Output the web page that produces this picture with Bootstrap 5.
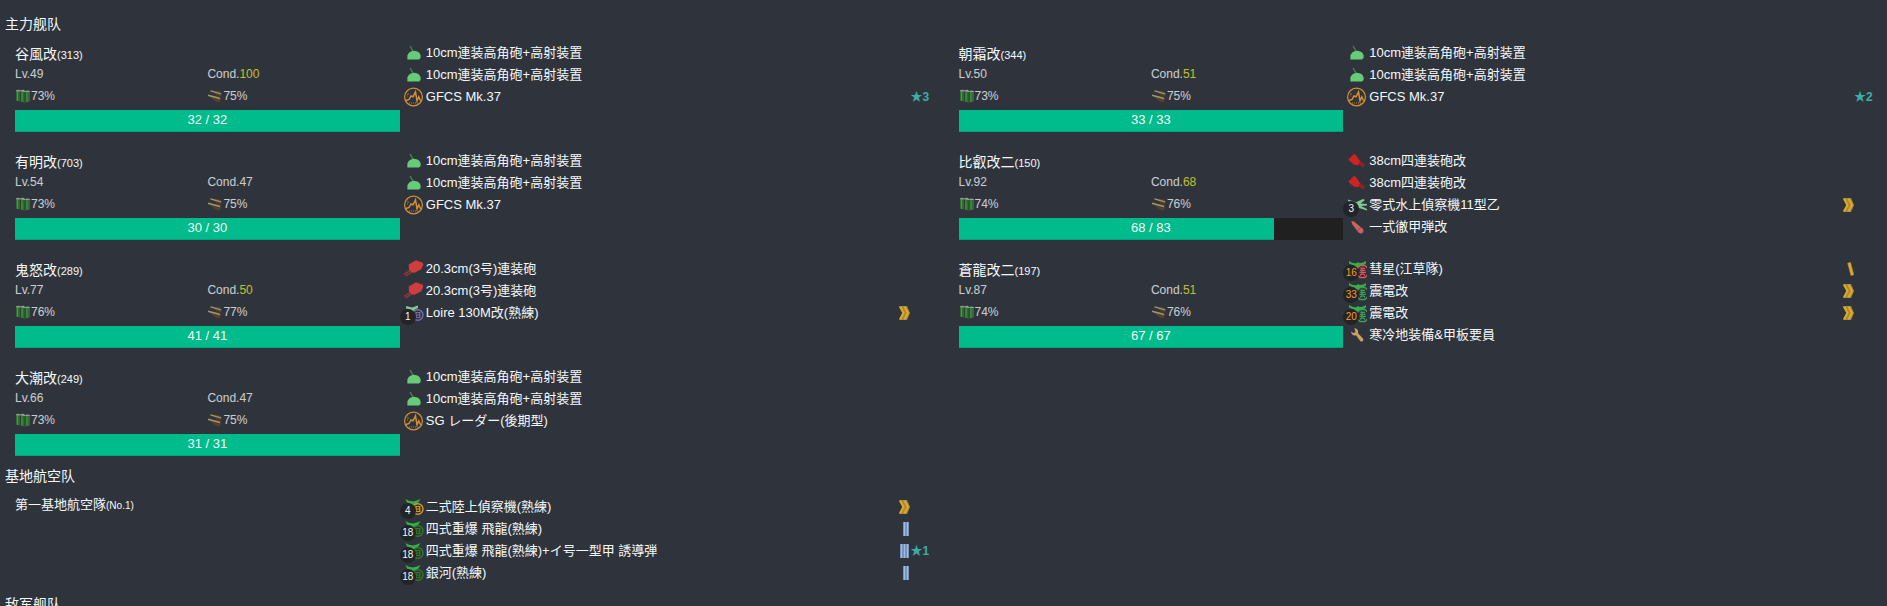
<!DOCTYPE html>
<html lang="zh-CN">
<head>
<meta charset="utf-8">
<meta name="viewport" content="width=device-width, initial-scale=1">
<title>主力舰队</title>
<link href="https://cdn.jsdelivr.net/npm/bootstrap@5.3.0/dist/css/bootstrap.min.css" rel="stylesheet">
<style>
  body { background: #2f343c; color: #f5f8fa; font: 13px/20px "Liberation Sans", "Noto Sans CJK SC", sans-serif; }
  main { padding-top: 14px; }
  .fleet-title { font-size: 14px; line-height: 20px; font-weight: 400; margin: 0; padding-left: 5px; }
  .ship { padding: 8px 5px 10px 15px; }
  .ship-name { font-size: 14px; line-height: 20px; height: 20px; font-weight: 400; margin: 2px 0 0; }
  .ship-name small { font-size: 11px; }
  .stat { font-size: 12px; line-height: 20px; opacity: .78; }
  .supply { line-height: 24px; }
  .supply svg { width: 16px; height: 16px; }
  .good { color: #e4e430; }
  .progress { --bs-progress-height: 22px; --bs-progress-bg: #202020; --bs-progress-border-radius: 0; --bs-progress-bar-bg: #00bc8c; margin-top: 2px; }
  .progress-bar { border-bottom: 1px solid #00a37a; }
  .hp-text { font-size: 13px; line-height: 20px; }
  .equips { padding: 0 10px 0 4px; margin: 0; }
  .equips li { height: 22px; gap: 2px; }
  .slot-icon, .slot-icon svg { width: 20px; height: 20px; overflow: visible; }
  .planes { left: -4px; bottom: -2px; width: 16px; height: 16px; background: #222427; font-size: 10px; line-height: 16px; }
  .few { color: #ff9c1c; }
  .prof { width: 11px; height: 16px; margin-right: -2px; }
  .star { width: 18px; font-size: 12px; font-weight: 700; color: #3aaea6; white-space: nowrap; }
  .airbase { padding: 9px 5px 10px 15px; }
  .base-name { font-size: 13px; line-height: 20px; font-weight: 400; margin: 0; }
  .base-name small { font-size: 10px; }
  .airbase .equips { margin-top: 1px; }
</style>
</head>
<body>
<svg class="d-none" aria-hidden="true">
  <symbol id="i-ha" viewBox="0 0 20 20"><path d="M6 3l3 5" stroke="#4b8058" stroke-width="1.4"/><path d="M3.400 15V12.500Q5 8 10 7.700Q15.500 8 16.600 12.500V15L15 16.400H3.400z" fill="#66cc77"/></symbol>
  <symbol id="i-radar" viewBox="0 0 20 20"><g fill="none" stroke="#d99032"><circle cx="9.500" cy="10" r="8.900" stroke-width="1.200"/><path d="M2 13.500l3-1 2-3.500 2 .8 2.500-5 1.500 9 1.800-4 1.700 4" stroke-width="1.500"/><path d="M5 16h9" stroke-width=".8" stroke-dasharray="1 1"/><path d="M3 7h2M3 9h1" stroke-width=".7"/></g></symbol>
  <symbol id="i-mid" viewBox="0 0 20 20"><path d="M-.500 15.800l7-4.500M1.500 17l7-4.500" stroke="#a83436" stroke-width="1.200"/><path d="M4.700 5.500L12 1.300l2 .8 4.700 1.600.6 2-2 4.500-6.800 3.500-3.200-.5L5 10.500z" fill="#d13d3d"/></symbol>
  <symbol id="i-big" viewBox="0 0 20 20"><path d="M12 9l6 4.300-1.500 3.200L10.500 13z" fill="#8a2226"/><path d="M1.300 8.700L6.500 3.300l2 .2L13 10l-1.800 4.200-4.200-.5z" fill="#cf2222"/></symbol>
  <symbol id="i-seaplane" viewBox="0 0 20 20"><path d="M1 4.500l8 2.800L16 4l2 1-4.500 3.500L20 9v1.500l-6 .5 6 3v1.500L12 13l-7 2-2-1 4-3L1 6.500z" fill="#83c892"/></symbol>
  <symbol id="i-shell" viewBox="0 0 20 20"><path d="M4.300 4l2.700.4 9 7.600.5 3-2.500 1.800-2.800-1.600L5.300 7.300z" fill="#cd6262"/><path d="M10.500 13.500l3.700-3.200" stroke="#94484c"/></symbol>
  <symbol id="i-wrench" viewBox="0 0 20 20"><path d="M7.300 3.300c3 0 4.500 2.500 3.700 5l5 5.200c1.200 2-1 4-2.600 2.700L9 10.200c-2.700.8-5-.8-4.800-3.700l2.500 1.700 1.800-1.400z" fill="#cda064"/></symbol>
  <symbol id="i-wing" viewBox="0 0 20 20"><path d="M2 2Q6 5 9.500 4.200L11 3l1.500 1Q16 4.300 19 2v2.500l-5 3 1 2H7l1-2.500L2 4.500z" fill="#35b04a"/></symbol>
  <symbol id="i-land" viewBox="0 0 20 20"><path d="M1.500 2L5 3.700 9 4.500l4-1L16.500 2 14 6l-3 1.500 1 2.500H5l1-3-3-1.500z" fill="#35b04a"/></symbol>
  <symbol id="i-mark" viewBox="0 0 20 20"><path d="M13 6.500h5l3 3v6l-3 3h-5l-3-3v-6z" fill="#2c3138" fill-opacity=".8" stroke="currentColor" stroke-width="1.400"/><path d="M13.500 9.300h4.500M13 11.400h5.500M12.500 13.300h6.500M15 8.500v7.500M13 16.500l1.500-1.500M18 16.500L16.300 14.500" stroke="currentColor" stroke-width="1.200"/></symbol>
  <symbol id="i-ring" viewBox="0 0 20 20"><circle cx="13.800" cy="12" r="5.200" fill="#2c3138" fill-opacity=".7" stroke="currentColor" stroke-width="1.400"/><path d="M12 9.500h3.800v5H12zM12 12h3.800" fill="none" stroke="currentColor" stroke-width="1.200"/></symbol>
  <symbol id="i-float" viewBox="0 0 20 20"><path d="M2 3l6 1.500L14 2.500V5l-4 2 1.500 2H5l1-2.500L2 5.500z" fill="#84c894"/></symbol>
  <symbol id="i-fuel" viewBox="0 0 16 16"><path d="M1 2.500h4.500v11L1 12.800zM5.500 2.500H10v12l-4.500-.8zM10 3.500h5v10l-5 1z" fill="#2f7a2c"/><path d="M2.500 4v9M7 4.500v9M12 5v9" stroke="#62a85e"/><path d="M5.500 4v9.500M10 4.500v9.500" stroke="#1d4d21"/><path d="M1 2.500q2-1.400 4.500 0Q8 1 10 3q2.500-1 5 0v.8q-2.500.8-5 0-2 .6-4.500-.8Q3 4 1 3.300z" fill="#b4bab4"/></symbol>
  <symbol id="i-ammo" viewBox="0 0 16 16"><path d="M4 2.500l8 .5 3 2.500-.5 3L10 7.500zM1 7.500l4 0 7 1 2.500 2L13 14H9z" fill="#58462a"/><path d="M3.500 2.800L14 5.800M1 7.300l12 3.200" stroke="#c7ad79" stroke-width="1.400"/></symbol>
  <symbol id="p-max" viewBox="0 0 11 16"><path d="M0 1h3.500L6 1h2l3 7-3 7H0l3.500-7z" fill="#a38b45"/><path d="M1 1.800L4.500 8 1 14.200M5.500 1.800L9 8l-3.500 6.200" fill="none" stroke="#e4aa1d" stroke-width="2"/></symbol>
  <symbol id="p-slash" viewBox="0 0 11 16"><path d="M6 1.500L9.500 14.500" stroke="#a38b45" stroke-width="3.600"/><path d="M6.200 2l3 12" stroke="#e2aa25" stroke-width="2"/></symbol>
  <symbol id="p-two" viewBox="0 0 11 16"><path d="M4 1h6v14H4z" fill="#617b9b"/><path d="M5.500 1v14M8.500 1v14" stroke="#9abbe4" stroke-width="1.800"/></symbol>
  <symbol id="p-three" viewBox="0 0 11 16"><path d="M1 1h9v14H1z" fill="#617b9b"/><path d="M2.500 1v14M5.500 1v14M8.500 1v14" stroke="#9abbe4" stroke-width="1.800"/></symbol>
</svg>

<main class="vh-100 overflow-hidden">
  <h2 class="fleet-title">主力舰队</h2>
  <div class="row g-0">
    <article class="col-6 ship"><div class="row g-0">
      <div class="col-5">
        <h3 class="ship-name">谷風改<small>(313)</small></h3>
        <div class="row g-0 stat"><span class="col-6">Lv.49</span><span class="col-6">Cond.<span class="good">100</span></span></div>
        <div class="row g-0 stat supply"><span class="col-6 d-flex align-items-center"><svg><use href="#i-fuel"/></svg>73%</span><span class="col-6 d-flex align-items-center"><svg><use href="#i-ammo"/></svg>75%</span></div>
        <div class="progress position-relative" role="progressbar" aria-label="HP" aria-valuenow="32" aria-valuemin="0" aria-valuemax="32"><div class="progress-bar" style="width:100%"></div><span class="hp-text position-absolute w-100 text-center">32 / 32</span></div>
      </div>
      <ul class="col-7 list-unstyled equips">
        <li class="d-flex align-items-center"><span class="slot-icon d-flex"><svg><use href="#i-ha"/></svg></span><span>10cm連装高角砲+高射装置</span></li>
        <li class="d-flex align-items-center"><span class="slot-icon d-flex"><svg><use href="#i-ha"/></svg></span><span>10cm連装高角砲+高射装置</span></li>
        <li class="d-flex align-items-center"><span class="slot-icon d-flex"><svg><use href="#i-radar"/></svg></span><span class="me-auto">GFCS Mk.37</span><span class="star">★3</span></li>
      </ul>
    </div></article>

    <article class="col-6 ship"><div class="row g-0">
      <div class="col-5">
        <h3 class="ship-name">朝霜改<small>(344)</small></h3>
        <div class="row g-0 stat"><span class="col-6">Lv.50</span><span class="col-6">Cond.<span class="good">51</span></span></div>
        <div class="row g-0 stat supply"><span class="col-6 d-flex align-items-center"><svg><use href="#i-fuel"/></svg>73%</span><span class="col-6 d-flex align-items-center"><svg><use href="#i-ammo"/></svg>75%</span></div>
        <div class="progress position-relative" role="progressbar" aria-label="HP" aria-valuenow="33" aria-valuemin="0" aria-valuemax="33"><div class="progress-bar" style="width:100%"></div><span class="hp-text position-absolute w-100 text-center">33 / 33</span></div>
      </div>
      <ul class="col-7 list-unstyled equips">
        <li class="d-flex align-items-center"><span class="slot-icon d-flex"><svg><use href="#i-ha"/></svg></span><span>10cm連装高角砲+高射装置</span></li>
        <li class="d-flex align-items-center"><span class="slot-icon d-flex"><svg><use href="#i-ha"/></svg></span><span>10cm連装高角砲+高射装置</span></li>
        <li class="d-flex align-items-center"><span class="slot-icon d-flex"><svg><use href="#i-radar"/></svg></span><span class="me-auto">GFCS Mk.37</span><span class="star">★2</span></li>
      </ul>
    </div></article>

    <article class="col-6 ship"><div class="row g-0">
      <div class="col-5">
        <h3 class="ship-name">有明改<small>(703)</small></h3>
        <div class="row g-0 stat"><span class="col-6">Lv.54</span><span class="col-6">Cond.47</span></div>
        <div class="row g-0 stat supply"><span class="col-6 d-flex align-items-center"><svg><use href="#i-fuel"/></svg>73%</span><span class="col-6 d-flex align-items-center"><svg><use href="#i-ammo"/></svg>75%</span></div>
        <div class="progress position-relative" role="progressbar" aria-label="HP" aria-valuenow="30" aria-valuemin="0" aria-valuemax="30"><div class="progress-bar" style="width:100%"></div><span class="hp-text position-absolute w-100 text-center">30 / 30</span></div>
      </div>
      <ul class="col-7 list-unstyled equips">
        <li class="d-flex align-items-center"><span class="slot-icon d-flex"><svg><use href="#i-ha"/></svg></span><span>10cm連装高角砲+高射装置</span></li>
        <li class="d-flex align-items-center"><span class="slot-icon d-flex"><svg><use href="#i-ha"/></svg></span><span>10cm連装高角砲+高射装置</span></li>
        <li class="d-flex align-items-center"><span class="slot-icon d-flex"><svg><use href="#i-radar"/></svg></span><span>GFCS Mk.37</span></li>
      </ul>
    </div></article>

    <article class="col-6 ship"><div class="row g-0">
      <div class="col-5">
        <h3 class="ship-name">比叡改二<small>(150)</small></h3>
        <div class="row g-0 stat"><span class="col-6">Lv.92</span><span class="col-6">Cond.<span class="good">68</span></span></div>
        <div class="row g-0 stat supply"><span class="col-6 d-flex align-items-center"><svg><use href="#i-fuel"/></svg>74%</span><span class="col-6 d-flex align-items-center"><svg><use href="#i-ammo"/></svg>76%</span></div>
        <div class="progress position-relative" role="progressbar" aria-label="HP" aria-valuenow="68" aria-valuemin="0" aria-valuemax="83"><div class="progress-bar" style="width:81.93%"></div><span class="hp-text position-absolute w-100 text-center">68 / 83</span></div>
      </div>
      <ul class="col-7 list-unstyled equips">
        <li class="d-flex align-items-center"><span class="slot-icon d-flex"><svg><use href="#i-big"/></svg></span><span>38cm四連装砲改</span></li>
        <li class="d-flex align-items-center"><span class="slot-icon d-flex"><svg><use href="#i-big"/></svg></span><span>38cm四連装砲改</span></li>
        <li class="d-flex align-items-center"><span class="slot-icon d-flex position-relative"><svg><use href="#i-seaplane"/></svg><span class="planes position-absolute rounded-circle text-center">3</span></span><span class="me-auto">零式水上偵察機11型乙</span><svg class="prof"><use href="#p-max"/></svg><span class="star"></span></li>
        <li class="d-flex align-items-center"><span class="slot-icon d-flex"><svg><use href="#i-shell"/></svg></span><span>一式徹甲弾改</span></li>
      </ul>
    </div></article>

    <article class="col-6 ship"><div class="row g-0">
      <div class="col-5">
        <h3 class="ship-name">鬼怒改<small>(289)</small></h3>
        <div class="row g-0 stat"><span class="col-6">Lv.77</span><span class="col-6">Cond.<span class="good">50</span></span></div>
        <div class="row g-0 stat supply"><span class="col-6 d-flex align-items-center"><svg><use href="#i-fuel"/></svg>76%</span><span class="col-6 d-flex align-items-center"><svg><use href="#i-ammo"/></svg>77%</span></div>
        <div class="progress position-relative" role="progressbar" aria-label="HP" aria-valuenow="41" aria-valuemin="0" aria-valuemax="41"><div class="progress-bar" style="width:100%"></div><span class="hp-text position-absolute w-100 text-center">41 / 41</span></div>
      </div>
      <ul class="col-7 list-unstyled equips">
        <li class="d-flex align-items-center"><span class="slot-icon d-flex"><svg><use href="#i-mid"/></svg></span><span>20.3cm(3号)連装砲</span></li>
        <li class="d-flex align-items-center"><span class="slot-icon d-flex"><svg><use href="#i-mid"/></svg></span><span>20.3cm(3号)連装砲</span></li>
        <li class="d-flex align-items-center"><span class="slot-icon d-flex position-relative"><svg color="#7a70a6"><use href="#i-float"/><use href="#i-ring"/></svg><span class="planes position-absolute rounded-circle text-center">1</span></span><span class="me-auto">Loire 130M改(熟練)</span><svg class="prof"><use href="#p-max"/></svg><span class="star"></span></li>
      </ul>
    </div></article>

    <article class="col-6 ship"><div class="row g-0">
      <div class="col-5">
        <h3 class="ship-name">蒼龍改二<small>(197)</small></h3>
        <div class="row g-0 stat"><span class="col-6">Lv.87</span><span class="col-6">Cond.<span class="good">51</span></span></div>
        <div class="row g-0 stat supply"><span class="col-6 d-flex align-items-center"><svg><use href="#i-fuel"/></svg>74%</span><span class="col-6 d-flex align-items-center"><svg><use href="#i-ammo"/></svg>76%</span></div>
        <div class="progress position-relative" role="progressbar" aria-label="HP" aria-valuenow="67" aria-valuemin="0" aria-valuemax="67"><div class="progress-bar" style="width:100%"></div><span class="hp-text position-absolute w-100 text-center">67 / 67</span></div>
      </div>
      <ul class="col-7 list-unstyled equips">
        <li class="d-flex align-items-center"><span class="slot-icon d-flex position-relative"><svg color="#d8555a"><use href="#i-wing"/><use href="#i-mark"/></svg><span class="planes few position-absolute rounded-circle text-center">16</span></span><span class="me-auto">彗星(江草隊)</span><svg class="prof"><use href="#p-slash"/></svg><span class="star"></span></li>
        <li class="d-flex align-items-center"><span class="slot-icon d-flex position-relative"><svg color="#3f9e58"><use href="#i-wing"/><use href="#i-mark"/></svg><span class="planes few position-absolute rounded-circle text-center">33</span></span><span class="me-auto">震電改</span><svg class="prof"><use href="#p-max"/></svg><span class="star"></span></li>
        <li class="d-flex align-items-center"><span class="slot-icon d-flex position-relative"><svg color="#3f9e58"><use href="#i-wing"/><use href="#i-mark"/></svg><span class="planes few position-absolute rounded-circle text-center">20</span></span><span class="me-auto">震電改</span><svg class="prof"><use href="#p-max"/></svg><span class="star"></span></li>
        <li class="d-flex align-items-center"><span class="slot-icon d-flex"><svg><use href="#i-wrench"/></svg></span><span>寒冷地装備&amp;甲板要員</span></li>
      </ul>
    </div></article>

    <article class="col-6 ship"><div class="row g-0">
      <div class="col-5">
        <h3 class="ship-name">大潮改<small>(249)</small></h3>
        <div class="row g-0 stat"><span class="col-6">Lv.66</span><span class="col-6">Cond.47</span></div>
        <div class="row g-0 stat supply"><span class="col-6 d-flex align-items-center"><svg><use href="#i-fuel"/></svg>73%</span><span class="col-6 d-flex align-items-center"><svg><use href="#i-ammo"/></svg>75%</span></div>
        <div class="progress position-relative" role="progressbar" aria-label="HP" aria-valuenow="31" aria-valuemin="0" aria-valuemax="31"><div class="progress-bar" style="width:100%"></div><span class="hp-text position-absolute w-100 text-center">31 / 31</span></div>
      </div>
      <ul class="col-7 list-unstyled equips">
        <li class="d-flex align-items-center"><span class="slot-icon d-flex"><svg><use href="#i-ha"/></svg></span><span>10cm連装高角砲+高射装置</span></li>
        <li class="d-flex align-items-center"><span class="slot-icon d-flex"><svg><use href="#i-ha"/></svg></span><span>10cm連装高角砲+高射装置</span></li>
        <li class="d-flex align-items-center"><span class="slot-icon d-flex"><svg><use href="#i-radar"/></svg></span><span>SG レーダー(後期型)</span></li>
      </ul>
    </div></article>
  </div>

  <h2 class="fleet-title">基地航空队</h2>
  <div class="row g-0">
    <article class="col-6 airbase"><div class="row g-0">
      <div class="col-5"><h3 class="base-name">第一基地航空隊<small>(No.1)</small></h3></div>
      <ul class="col-7 list-unstyled equips">
        <li class="d-flex align-items-center"><span class="slot-icon d-flex position-relative"><svg color="#d9981b"><use href="#i-land"/><use href="#i-ring"/></svg><span class="planes position-absolute rounded-circle text-center">4</span></span><span class="me-auto">二式陸上偵察機(熟練)</span><svg class="prof"><use href="#p-max"/></svg><span class="star"></span></li>
        <li class="d-flex align-items-center"><span class="slot-icon d-flex position-relative"><svg color="#2f7d22"><use href="#i-land"/><use href="#i-ring"/></svg><span class="planes position-absolute rounded-circle text-center">18</span></span><span class="me-auto">四式重爆 飛龍(熟練)</span><svg class="prof"><use href="#p-two"/></svg><span class="star"></span></li>
        <li class="d-flex align-items-center"><span class="slot-icon d-flex position-relative"><svg color="#2f7d22"><use href="#i-land"/><use href="#i-ring"/></svg><span class="planes position-absolute rounded-circle text-center">18</span></span><span class="me-auto">四式重爆 飛龍(熟練)+イ号一型甲 誘導弾</span><svg class="prof"><use href="#p-three"/></svg><span class="star">★1</span></li>
        <li class="d-flex align-items-center"><span class="slot-icon d-flex position-relative"><svg color="#2f7d22"><use href="#i-land"/><use href="#i-ring"/></svg><span class="planes position-absolute rounded-circle text-center">18</span></span><span class="me-auto">銀河(熟練)</span><svg class="prof"><use href="#p-two"/></svg><span class="star"></span></li>
      </ul>
    </div></article>
  </div>

  <h2 class="fleet-title">敌军舰队</h2>
</main>
<script src="https://cdn.jsdelivr.net/npm/bootstrap@5.3.0/dist/js/bootstrap.bundle.min.js"></script>
</body>
</html>
